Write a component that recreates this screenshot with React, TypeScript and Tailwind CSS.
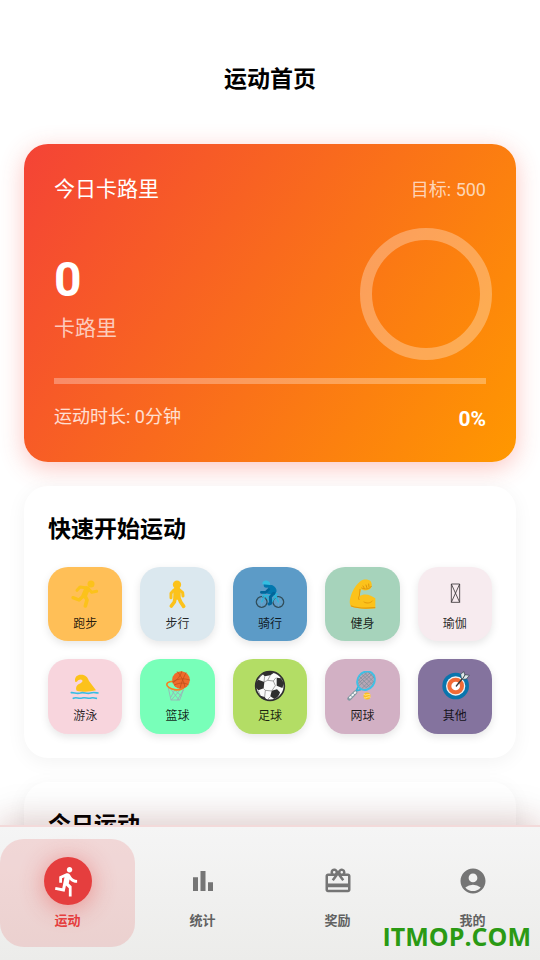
import type { ReactNode } from 'react';
import { MdAccountCircle, MdCardGiftcard, MdDirectionsRun } from 'react-icons/md';

function Runner() {
  return (
    <svg viewBox="91 58 90 90" className="size-[30px]" fill="none" stroke="#fcc21b" strokeLinecap="round" strokeLinejoin="round">
      <circle cx="154" cy="73" r="10.5" fill="#fcc21b" stroke="none" />
      <path d="M142 88L134 107" strokeWidth="17" />
      <path d="M138 84L121 82L112 92" strokeWidth="9" />
      <path d="M147 88L156 98L171 95" strokeWidth="9" />
      <path d="M132 108L118 121L100 114" strokeWidth="10" />
      <path d="M136 109L142 121L137 139" strokeWidth="11" />
    </svg>
  );
}

function Walker() {
  return (
    <svg viewBox="98 58 90 90" className="size-[30px]" fill="none" stroke="#fcc21b" strokeLinecap="round" strokeLinejoin="round">
      <circle cx="140" cy="75" r="12.5" fill="#fcc21b" stroke="none" />
      <path d="M140 93L140 109" strokeWidth="22" />
      <path d="M131 91L122 101L122 114" strokeWidth="9" />
      <path d="M148 91L157 99L158 109" strokeWidth="9" />
      <path d="M135 112L132 127L123 139" strokeWidth="11" />
      <path d="M144 111L151 127L160 140" strokeWidth="11" />
    </svg>
  );
}

function Cyclist() {
  return (
    <svg viewBox="375 58 90 90" className="size-[30px]" fill="none" strokeLinecap="round" strokeLinejoin="round">
      <g stroke="#2f4a56" strokeWidth="4">
        <circle cx="395" cy="127" r="16" />
        <circle cx="445" cy="127" r="16" />
      </g>
      <g stroke="#7db4d4" strokeWidth="1">
        <path d="M395 113V141M381 127H409M385 117L405 137M385 137L405 117M445 113V141M431 127H459M435 117L455 137M435 137L455 117" />
      </g>
      <path d="M395 127L405 108L424 129L438 108L445 127M405 108H438M403 102L398 110M436 103H442" stroke="#29b6db" strokeWidth="4" />
      <path d="M412 79C425 73 440 82 438 96L433 105L407 99L419 90Z" fill="#0277ae" stroke="#0277ae" strokeWidth="3" />
      <path d="M416 89L407 98L394 98" stroke="#01659a" strokeWidth="8" />
      <path d="M431 101L421 112L422 131L417 133" stroke="#01659a" strokeWidth="9" />
      <circle cx="409" cy="76" r="8" fill="#0277ae" />
      <path d="M397 74C396 65 404 61 412 63C419 65 422 71 420 76Z" fill="#35bde0" />
    </svg>
  );
}

function Biceps() {
  return (
    <svg viewBox="112 58 90 90" className="size-[30px]" fill="none" strokeLinecap="round" strokeLinejoin="round">
      <path d="M152 65C160 57 177 59 182 64C187 69 188 82 182 87C175 93 161 94 154 89L149 109C166 99 185 106 197 116V146C171 149 143 146 127 141C117 136 119 119 127 99C134 83 142 73 152 65Z" fill="#fcc21b" />
      <path d="M125 139C143 146 171 146 195 144" stroke="#e59a0b" strokeWidth="4" />
      <path d="M151 89L149 109C146 112 146 117 148 120M163 127C170 132 183 131 188 124" stroke="#e59a0b" strokeWidth="3" />
      <path d="M160 79L164 86M169 76L172 85M177 73L178 82M156 85C166 91 181 88 185 80" stroke="#d88b08" strokeWidth="2.5" />
    </svg>
  );
}

function MissingGlyph() {
  return (
    <svg viewBox="389 58 90 90" className="size-[30px]" fill="none" stroke="#3b3639" strokeWidth="2.5">
      <path d="M423 73H448V128H423ZM423 73L448 128M448 73L423 128" />
    </svg>
  );
}

function Swimmer() {
  return (
    <svg viewBox="91 64 90 90" className="size-[30px]" fill="none" strokeLinecap="round" strokeLinejoin="round">
      <path d="M106 93C105 81 114 74 125 75C137 75 144 82 148 94L169 122C151 127 127 127 111 123C107 116 110 107 118 103C125 100 130 97 128 92C124 87 116 90 113 95C110 98 106 97 106 93Z" fill="#fcc21b" />
      <path d="M95 129C104 128 111 134 122 130C132 126 142 134 152 130C161 127 168 129 175 130" stroke="#38bde3" strokeWidth="5" />
      <path d="M101 146C110 141 116 148 127 145C137 142 146 148 154 145C161 143 166 145 170 146" stroke="#38bde3" strokeWidth="5" />
    </svg>
  );
}

function Basketball() {
  return (
    <svg viewBox="368 64 90 90" className="size-[30px]" fill="none" strokeLinecap="round" strokeLinejoin="round">
      <path d="M384 115L392 151H418L429 121M391 118L416 151M403 121L392 142M403 121L423 139M418 122L393 151M429 121L411 151" stroke="#9ab0b8" strokeWidth="2.5" />
      <ellipse cx="405" cy="108" rx="26" ry="12" transform="rotate(10 405 108)" stroke="#f58220" strokeWidth="5" />
      <circle cx="422" cy="91" r="26.5" fill="#ee6c2c" />
      <path d="M397 96C414 85 434 86 448 91M402 106C419 97 436 100 444 105M411 66C421 76 432 97 434 112M425 64C421 79 410 92 398 99M437 69C430 83 423 98 419 116" stroke="#b84b19" strokeWidth="2" />
    </svg>
  );
}

function SoccerBall() {
  return (
    <svg viewBox="105 64 90 90" className="size-[30px] overflow-visible" strokeLinejoin="round">
      <circle cx="150" cy="109" r="43" fill="#fafafa" stroke="#2f2f2f" strokeWidth="5" />
      <g fill="#2f2f2f">
        <path d="M126 71C134 65 149 64 162 69L151 77L134 80Z" />
        <path d="M115 90L133 97L131 116L115 122L107 113C106 103 109 95 115 90Z" />
        <path d="M170 84L183 86L192 101L187 115L170 108Z" />
        <path d="M155 123L171 119L180 128C178 138 171 145 163 148L151 140Z" />
        <path d="M121 138L134 142L140 151C132 151 125 147 121 138Z" />
      </g>
      <path d="M134 80L132 97L143 92L151 77M143 92L160 94L168 84M160 94L166 108L155 124L136 122L130 116M136 122L134 142M151 141L140 152M115 90L124 75M115 123L121 138" fill="none" stroke="#777777" strokeWidth="2" />
    </svg>
  );
}

function Tennis() {
  return (
    <svg viewBox="382 64 90 90" className="size-[30px]" fill="none" strokeLinecap="round" strokeLinejoin="round">
      <path d="M409 124L415 112M409 124L423 120" stroke="#2fb3da" strokeWidth="5" />
      <path d="M389 147L407 128" stroke="#8298a2" strokeWidth="12" />
      <path d="M391 144L407 128" stroke="#f4f8f8" strokeWidth="6" strokeDasharray="3 7" />
      <ellipse cx="439" cy="93" rx="25" ry="29" transform="rotate(36 439 93)" fill="#b7a6b6" stroke="#3fc1e6" strokeWidth="6" />
      <path d="M426 73L457 104M420 81L449 110M417 91L438 113M435 70L461 96M447 69L463 84M457 74L418 108M462 82L428 115M451 70L416 101M442 69L417 91M461 96L439 114" stroke="#7c8c99" strokeWidth="2" />
      <circle cx="442" cy="139" r="10.5" fill="#fcbf22" />
      <path d="M433 135C439 140 446 131 451 135M434 145C441 147 446 138 452 142" stroke="#ffe9a0" strokeWidth="2.5" />
    </svg>
  );
}

function Target() {
  return (
    <svg viewBox="119 64 90 90" className="size-[30px]" fill="none" strokeLinecap="round" strokeLinejoin="round">
      <circle cx="166" cy="109" r="40" fill="#0a75ad" />
      <circle cx="166" cy="109" r="29" fill="#f1f5f6" />
      <circle cx="166" cy="109" r="25" fill="#f26b36" />
      <circle cx="166" cy="109" r="13" fill="#ffffff" />
      <path d="M168 109L190 82" stroke="#333c40" strokeWidth="4" />
      <path d="M183 84L181 73L191 66L193 75L207 77L198 88L187 89Z" fill="#e0e8eb" stroke="#37444a" strokeWidth="2" />
      <path d="M187 87L194 76" stroke="#37444a" strokeWidth="3" />
    </svg>
  );
}

function BarChartIcon() {
  return (
    <svg viewBox="0 0 24 24" className="size-[30px]" fill="currentColor" aria-hidden="true">
      <path d="M4 9h4v11H4zM16 13h4v7h-4zM10 4h4v16h-4z" />
    </svg>
  );
}

const sports: { name: string; tile: string; icon: ReactNode }[] = [
  { name: '跑步', tile: 'bg-[#ffbf57]', icon: <Runner /> },
  { name: '步行', tile: 'bg-[#dbe8ef]', icon: <Walker /> },
  { name: '骑行', tile: 'bg-[#5c9bc7]', icon: <Cyclist /> },
  { name: '健身', tile: 'bg-[#a6d3bb]', icon: <Biceps /> },
  { name: '瑜伽', tile: 'bg-[#f7ebef]', icon: <MissingGlyph /> },
  { name: '游泳', tile: 'bg-[#f8d5dd]', icon: <Swimmer /> },
  { name: '篮球', tile: 'bg-[#78ffb9]', icon: <Basketball /> },
  { name: '足球', tile: 'bg-[#b3dd65]', icon: <SoccerBall /> },
  { name: '网球', tile: 'bg-[#d2b0c4]', icon: <Tennis /> },
  { name: '其他', tile: 'bg-[#84739e]', icon: <Target /> },
];

const tabs: { name: string; icon: ReactNode; active?: boolean }[] = [
  { name: '运动', icon: <MdDirectionsRun className="size-[33px]" />, active: true },
  { name: '统计', icon: <BarChartIcon /> },
  { name: '奖励', icon: <MdCardGiftcard className="size-[30px]" /> },
  { name: '我的', icon: <MdAccountCircle className="size-[30px]" /> },
];

function CalorieCard() {
  return (
    <section className="rounded-3xl bg-linear-[123deg] from-[#f44336] to-[#ff9800] px-[30px] py-[31px] text-white shadow-[0_6px_24px_rgba(244,67,54,0.3)]">
      <div className="flex h-[30px] items-center justify-between">
        <h2 className="text-[21px]">今日卡路里</h2>
        <p className="text-lg text-white/70">目标: 500</p>
      </div>
      <div className="mt-[29px] flex items-center justify-between">
        <div className="pt-2">
          <p className="text-[48px] leading-[56px] font-bold">0</p>
          <p className="mt-1 text-[21px] leading-8 text-white/70">卡路里</p>
        </div>
        <svg viewBox="0 0 120 120" className="size-[120px] overflow-visible" fill="none">
          <circle cx="60" cy="60" r="60" stroke="#ffffff" strokeOpacity="0.3" strokeWidth="12" />
        </svg>
      </div>
      <div role="progressbar" aria-label="今日卡路里" aria-valuenow={0} className="mt-6 h-1.5 bg-white/30" />
      <div className="mt-[17px] flex h-[30px] items-end justify-between">
        <p className="text-lg leading-7 text-white/80">运动时长: 0分钟</p>
        <p className="text-[21px] leading-6 font-bold">0%</p>
      </div>
    </section>
  );
}

export default function App() {
  return (
    <div className="relative flex h-screen flex-col overflow-hidden bg-white font-[Roboto,'Noto_Sans_CJK_SC',sans-serif] text-black">
      <main className="min-h-0 flex-1 overflow-y-auto px-6 [scrollbar-width:none]">
        <h1 className="pt-[62px] pb-[46px] text-center text-[23px] leading-9 font-bold">运动首页</h1>
        <CalorieCard />
        <section className="mt-6 rounded-3xl bg-white p-6 shadow-[0_4px_20px_rgba(0,0,0,0.05)]">
          <h2 className="pt-0.5 text-[23px] leading-9 font-bold">快速开始运动</h2>
          <div className="mt-[19px] grid grid-cols-5 gap-[18px]">
            {sports.map((s) => (
              <button
                key={s.name}
                className={`flex aspect-square flex-col items-center rounded-[20px] pt-3 shadow-[0_3px_8px_rgba(0,0,0,0.1)] ${s.tile}`}
              >
                {s.icon}
                <span className="mt-[7px] text-xs leading-4 text-black/85">{s.name}</span>
              </button>
            ))}
          </div>
        </section>
        <section className="mt-6 rounded-3xl bg-white p-6 shadow-[0_4px_20px_rgba(0,0,0,0.05)]">
          <h2 className="pt-0.5 text-[23px] leading-9 font-bold">今日运动</h2>
        </section>
      </main>
      <nav className="relative flex border-t-2 border-[#f3dada] bg-linear-to-b from-[#f5f5f5] to-[#ececea] pt-3 pb-[13px] shadow-[0_-8px_36px_rgba(0,0,0,0.12),0_-6px_24px_rgba(229,57,53,0.1)]">
        {tabs.map((t) => (
          <button
            key={t.name}
            className={`flex h-[108px] flex-1 flex-col items-center rounded-3xl pt-[18px] ${t.active ? 'bg-[#e53935]/15 text-[#e53e3e]' : 'text-[#757575]'}`}
          >
            <span
              className={`flex size-12 items-center justify-center rounded-full ${t.active ? 'bg-[#e53e3e] text-white shadow-[0_3px_24px_rgba(229,57,53,0.45)]' : ''}`}
            >
              {t.icon}
            </span>
            <span className={`mt-1.5 text-[13px] leading-5 font-bold ${t.active ? '' : 'text-[#616161]'}`}>{t.name}</span>
          </button>
        ))}
      </nav>
      <p className="absolute right-[9px] bottom-2 font-['Open_Sans',sans-serif] text-[25px] leading-8 font-bold text-[#2a9a14]">
        ITMOP.COM
      </p>
    </div>
  );
}
